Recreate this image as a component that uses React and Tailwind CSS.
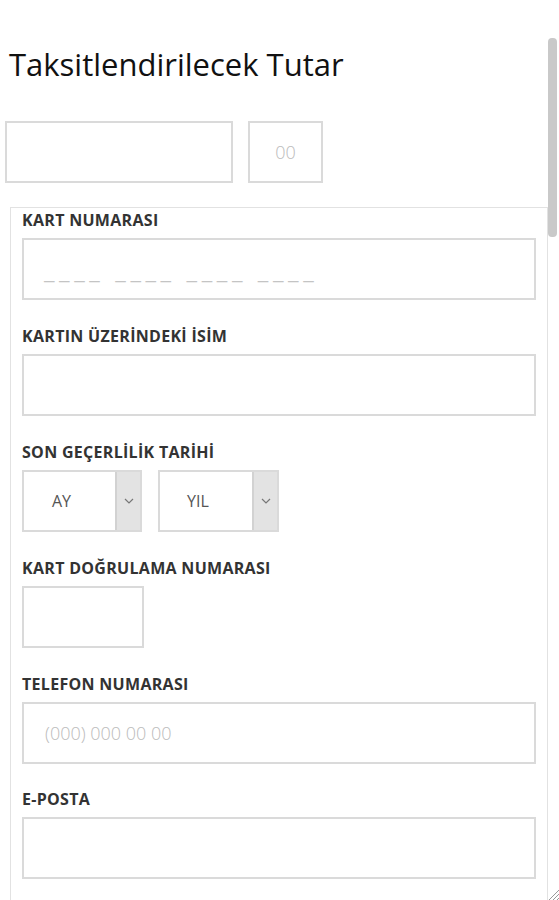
import React from 'react'

const font = { fontFamily: '"Open Sans", "Noto Sans", sans-serif' }

function Label({ children }) {
  return (
    <div className="h-[18px] leading-[18px] mb-[9px] text-[16px] font-bold text-[#333] tracking-[0.3px]">
      {children}
    </div>
  )
}

function Box({ className = '', children }) {
  return (
    <div className={`h-[62px] border-2 border-[#dadada] bg-white flex items-center ${className}`}>
      {children}
    </div>
  )
}

function Chevron() {
  return (
    <svg width="10" height="6" viewBox="0 0 10 6" fill="none">
      <polyline points="1,1 5,5 9,1" stroke="#777" strokeWidth="1.2" />
    </svg>
  )
}

function Select({ label, width }) {
  return (
    <div className={`h-[62px] ${width} border-2 border-[#dadada] flex`}>
      <div className="flex-1 flex items-center justify-center pr-[16px] text-[16px] text-[#555]">{label}</div>
      <div className="w-[25px] bg-[#e3e3e3] border-l-2 border-[#d2d2d2] flex items-center justify-center">
        <Chevron />
      </div>
    </div>
  )
}

export default function App() {
  return (
    <div className="w-[559px] h-[900px] bg-white relative overflow-hidden flex" style={font}>
      <div className="flex-1 min-w-0">
        <h1 className="pt-[44px] pl-[9px] text-[31px] leading-[40px] text-[#111]">Taksitlendirilecek Tutar</h1>
        <div className="mt-[37px] flex items-center pl-[5px] gap-[15px]">
          <Box className="w-[228px]" />
          <Box className="w-[75px] justify-center text-[18px] font-light text-[#bbb]">00</Box>
        </div>
        <div className="mt-[24px] ml-[10px] border-l border-t border-r border-[#e2e2e2] pt-[3px] px-[11px] h-[700px]">
          <Label>KART NUMARASI</Label>
          <Box className="pl-[20px] items-end pb-[16px]">
            <span className="text-[24px] leading-[24px] text-[#c4c4c4] tracking-[4.6px]">____ ____ ____ ____</span>
          </Box>

          <div className="mt-[27px]"><Label>KARTIN ÜZERİNDEKİ İSİM</Label></div>
          <Box />

          <div className="mt-[27px]"><Label>SON GEÇERLİLİK TARİHİ</Label></div>
          <div className="flex gap-[16px]">
            <Select label="AY" width="w-[120px]" />
            <Select label="YIL" width="w-[121px]" />
          </div>

          <div className="mt-[27px]"><Label>KART DOĞRULAMA NUMARASI</Label></div>
          <Box className="w-[122px]" />

          <div className="mt-[27px]"><Label>TELEFON NUMARASI</Label></div>
          <Box className="pl-[21px]">
            <span className="text-[18px] font-light text-[#bbb]">(000) 000 00 00</span>
          </Box>

          <div className="mt-[26px]"><Label>E-POSTA</Label></div>
          <Box />
        </div>
      </div>
      <div className="w-[11px] shrink-0 relative">
        <div className="mt-[38px] w-[9px] h-[199px] rounded-[4px] bg-[#c9c9c9]" />
      </div>
      <svg className="absolute right-0 bottom-0" width="12" height="12" viewBox="0 0 12 12">
        <line x1="12" y1="2" x2="2" y2="12" stroke="#999" strokeWidth="1" />
        <line x1="12" y1="6" x2="6" y2="12" stroke="#999" strokeWidth="1" />
        <line x1="12" y1="10" x2="10" y2="12" stroke="#999" strokeWidth="1" />
      </svg>
    </div>
  )
}
